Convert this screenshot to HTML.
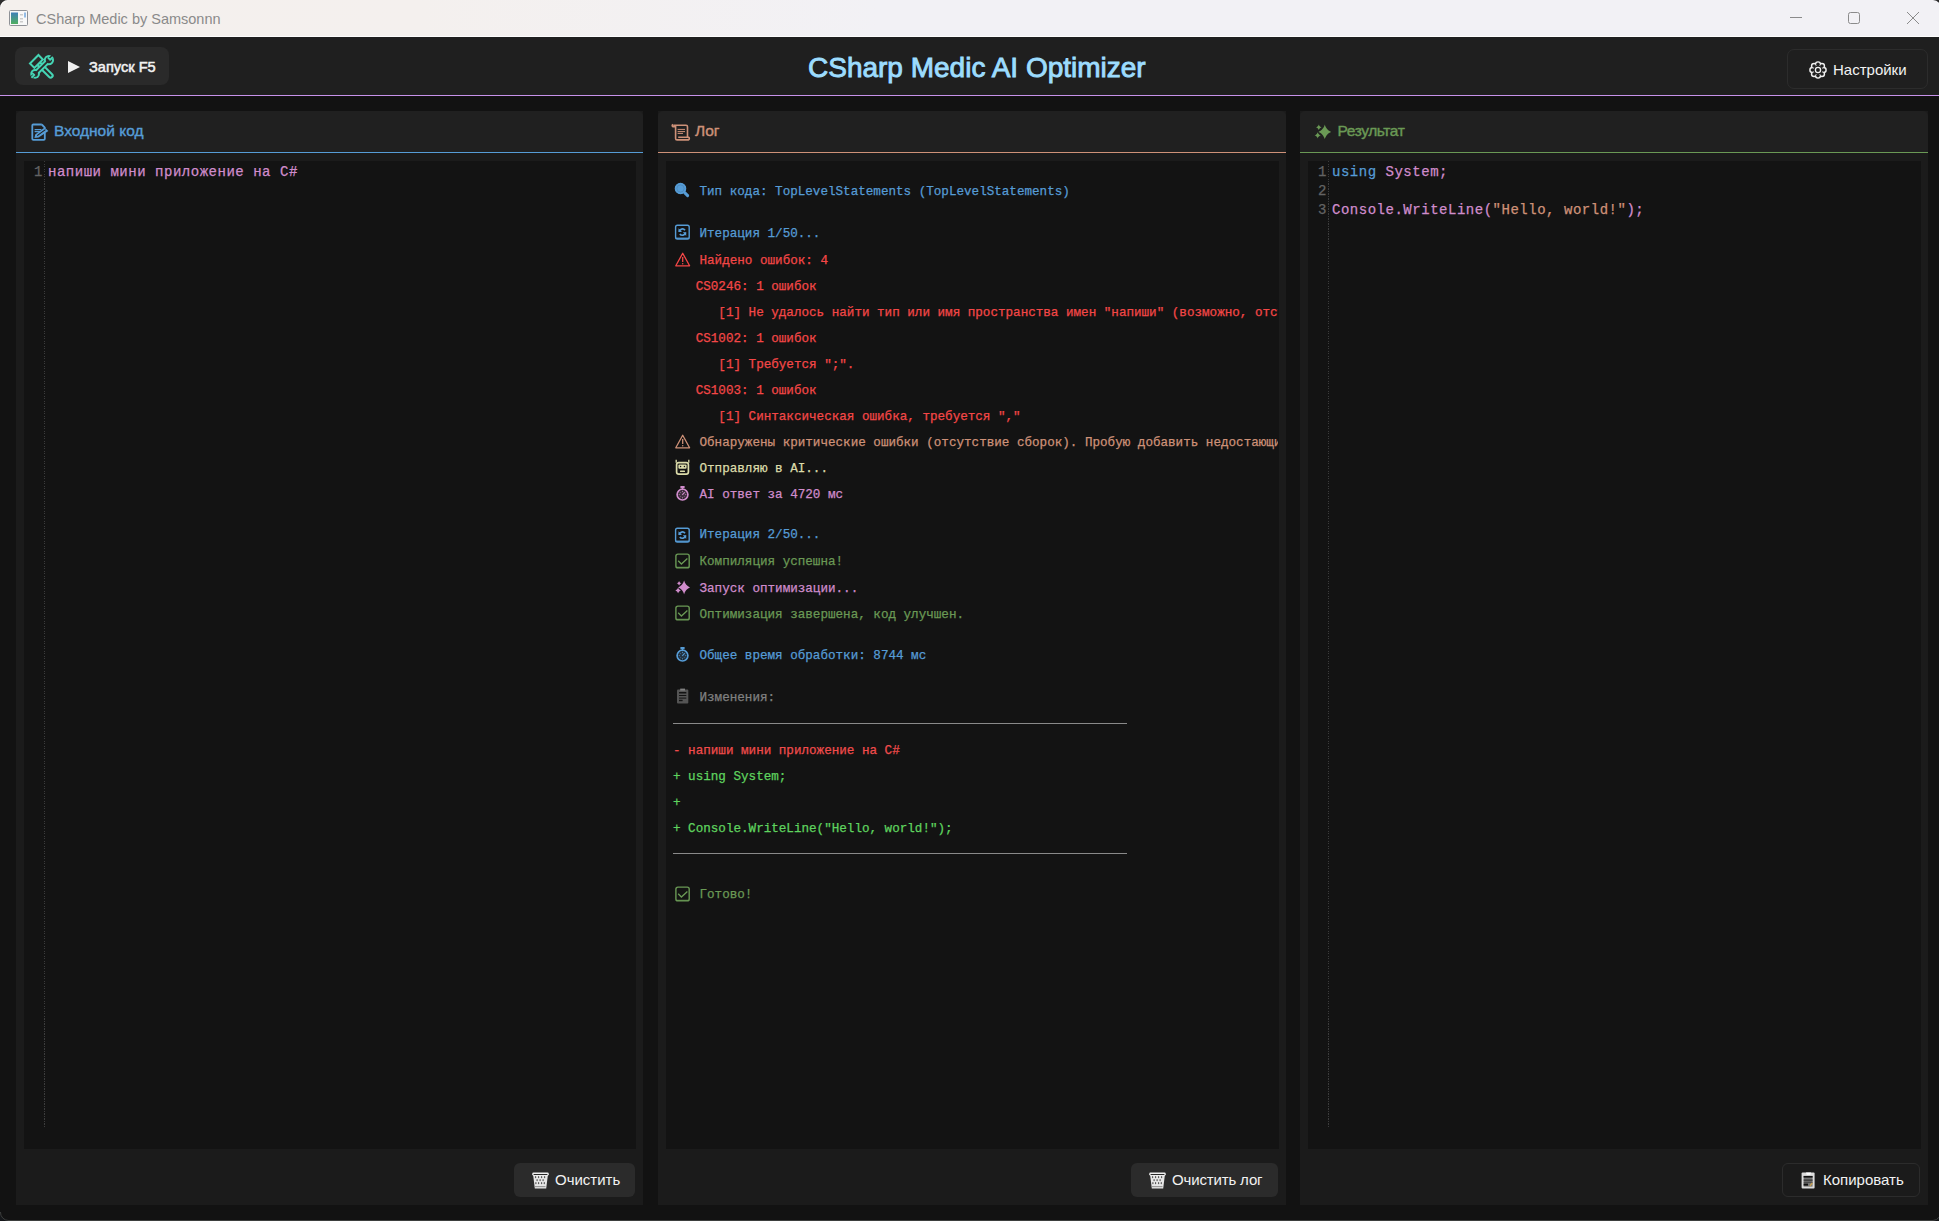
<!DOCTYPE html>
<html><head><meta charset="utf-8">
<style>
*{margin:0;padding:0;box-sizing:border-box}
html,body{width:1939px;height:1221px;overflow:hidden;background:#121212;font-family:"Liberation Sans",sans-serif;position:relative}
.abs{position:absolute}
#tb{left:0;top:0;width:1939px;height:37px;background:linear-gradient(90deg,#f4f0ed 0,#f4f0ee 420px,#f2f1f5 880px,#f2f1f5 100%);border-bottom:1px solid #fdfdfd}
#tbt{left:36px;top:9.5px;font-size:14.5px;color:#8a8a8a;line-height:18px;white-space:nowrap}
#hdr{left:0;top:37px;width:1939px;height:58px;background:#1f1f1f}
#hline{left:0;top:95px;width:1939px;height:1px;background:#c792ea}
.btn{position:absolute;border-radius:6px;color:#f2f2f2;font-size:15px;white-space:nowrap}
.panel{position:absolute;top:111px;height:1094px;background:#1b1b1b}
.ph{position:absolute;left:0;top:0;right:0;height:41px;background:#202020;border-radius:5px 5px 0 0}
.pl{position:absolute;left:0;right:0;top:41px;height:1px}
.code{position:absolute;left:8px;top:50px;right:7px;height:988px;background:#131313;overflow:hidden}
.ptitle{position:absolute;top:10px;font-size:15.5px;line-height:20px;-webkit-text-stroke:0.4px currentColor;white-space:nowrap}
.mono{font-family:"Liberation Mono",monospace;-webkit-text-stroke:0.25px currentColor}
.log{position:absolute;left:673px;font-family:"Liberation Mono",monospace;font-size:12.6px;letter-spacing:0px;line-height:20px;white-space:pre;-webkit-text-stroke:0.25px currentColor}
.ic{position:absolute;overflow:visible;z-index:5}
</style></head><body>
<div id="tb" class="abs"></div>
<div id="tbt" class="abs">CSharp Medic by Samsonnn</div>
<div id="hdr" class="abs"></div>
<div id="hline" class="abs"></div>
<!-- window controls -->
<svg class="ic" style="left:0;top:0" width="1939" height="37">
  <path d="M1790 17.5H1802" stroke="#8b8b8b" stroke-width="1"/>
  <rect x="1848.5" y="12.5" width="11" height="11" rx="2" fill="none" stroke="#8b8b8b" stroke-width="1"/>
  <path d="M1907 12L1919 24M1919 12L1907 24" stroke="#8b8b8b" stroke-width="1"/>
  <rect x="9.5" y="10.5" width="18" height="15" rx="1" fill="#f8f8f8" stroke="#8e9196" stroke-width="1"/>
  <defs><linearGradient id="appg" x1="0" y1="0" x2="0" y2="1"><stop offset="0" stop-color="#3f7fb8"/><stop offset="1" stop-color="#4fae5f"/></linearGradient></defs><rect x="11" y="12.5" width="7" height="11.5" fill="url(#appg)"/>
  <rect x="20" y="14" width="3" height="1.5" fill="#ccc"/><rect x="20" y="18" width="3" height="1.5" fill="#ccc"/><rect x="20" y="21" width="3" height="1.5" fill="#ccc"/>
  <rect x="24.5" y="12.5" width="1" height="5" fill="#2f7fd0"/>
</svg>
<!-- header buttons -->
<div class="btn" style="left:15px;top:47px;width:154px;height:38px;background:#2a2a2a;border-radius:8px"></div>
<svg class="ic" style="left:27px;top:52px" width="30" height="30" viewBox="0 0 30 30"><g transform="translate(0.6 0.6) scale(0.96)"><path d="M17.40 7.08L11.32 1.00L1.00 11.32L7.08 17.40ZM10.77 15.23L21.77 26.23A3.1500000000000004 3.1500000000000004 0 0 0 26.23 21.77L15.23 10.77A3.1500000000000004 3.1500000000000004 0 0 0 10.77 15.23Z" fill="#45d4b4"/><path d="M14.43 7.08L11.32 3.97L3.97 11.32L7.08 14.43ZM12.26 13.74L23.26 24.74A1.05 1.05 0 0 0 24.74 23.26L13.74 12.26A1.05 1.05 0 0 0 12.26 13.74Z" fill="#2a2a2a"/><path d="M10.16 24.16L24.16 10.16A3.05 3.05 0 0 0 19.84 5.84L5.84 19.84A3.05 3.05 0 0 0 10.16 24.16Z" fill="#45d4b4"/><circle cx="22.2" cy="7.8" r="5.35" fill="#45d4b4"/><circle cx="7.8" cy="22.2" r="5.05" fill="#45d4b4"/><path d="M8.67 22.67L22.67 8.67A0.95 0.95 0 0 0 21.33 7.33L7.33 21.33A0.95 0.95 0 0 0 8.67 22.67Z" fill="#2a2a2a"/><circle cx="22.2" cy="7.8" r="3.25" fill="#2a2a2a"/><circle cx="7.8" cy="22.2" r="2.95" fill="#2a2a2a"/><path d="M28.48 3.93L26.07 1.52L21.12 6.47L23.53 8.88ZM8.81 23.46L6.54 21.19L1.59 26.14L3.86 28.41Z" fill="#2a2a2a"/><path d="M21 5L23.5 7.4L26.4 4.6M4.6 21.2L7 23.2L4 26.2" fill="none" stroke="#45d4b4" stroke-width="2" stroke-linejoin="round"/></g></svg>
<svg class="ic" style="left:67px;top:60px" width="14" height="14" viewBox="0 0 14 14"><path d="M1 1L13 7L1 13Z" fill="#f0f0f0"/></svg>
<div class="btn" style="left:89px;top:57px;font-size:14.6px;line-height:20px;-webkit-text-stroke:0.5px #f2f2f2;color:#f2f2f2">Запуск F5</div>

<div class="abs" style="left:808px;top:50px;font-size:28px;line-height:36px;color:#9cdcfe;-webkit-text-stroke:0.9px #9cdcfe;letter-spacing:0px;white-space:nowrap">CSharp Medic AI Optimizer</div>

<div class="btn" style="left:1787px;top:49px;width:141px;height:40px;border:1px solid #2c2c2c;border-radius:7px"></div>
<svg class="ic" style="left:1809px;top:61px" width="18" height="18" viewBox="0 0 18 18"><circle cx="14.60" cy="9.00" r="3.20" fill="#f0f0f0"/><circle cx="12.96" cy="12.96" r="3.20" fill="#f0f0f0"/><circle cx="9.00" cy="14.60" r="3.20" fill="#f0f0f0"/><circle cx="5.04" cy="12.96" r="3.20" fill="#f0f0f0"/><circle cx="3.40" cy="9.00" r="3.20" fill="#f0f0f0"/><circle cx="5.04" cy="5.04" r="3.20" fill="#f0f0f0"/><circle cx="9.00" cy="3.40" r="3.20" fill="#f0f0f0"/><circle cx="12.96" cy="5.04" r="3.20" fill="#f0f0f0"/><circle cx="9" cy="9" r="5.6" fill="#f0f0f0"/><circle cx="14.60" cy="9.00" r="1.80" fill="#1f1f1f"/><circle cx="12.96" cy="12.96" r="1.80" fill="#1f1f1f"/><circle cx="9.00" cy="14.60" r="1.80" fill="#1f1f1f"/><circle cx="5.04" cy="12.96" r="1.80" fill="#1f1f1f"/><circle cx="3.40" cy="9.00" r="1.80" fill="#1f1f1f"/><circle cx="5.04" cy="5.04" r="1.80" fill="#1f1f1f"/><circle cx="9.00" cy="3.40" r="1.80" fill="#1f1f1f"/><circle cx="12.96" cy="5.04" r="1.80" fill="#1f1f1f"/><circle cx="9" cy="9" r="4.6" fill="#1f1f1f"/><circle cx="9" cy="9" r="2.6" fill="none" stroke="#f0f0f0" stroke-width="1.3"/></svg>
<div class="btn" style="left:1833px;top:60px;font-size:15px;line-height:20px">Настройки</div>

<div class="panel" style="left:16px;width:627px">
  <div class="ph"></div><div class="pl" style="background:#569cd6"></div>
  <div class="code"></div>
  <div class="ptitle" style="left:38px;color:#569cd6">Входной код</div>
</div>
<div class="panel" style="left:658px;width:628px">
  <div class="ph"></div><div class="pl" style="background:#ce9178"></div>
  <div class="code"></div>
  <div class="ptitle" style="left:37px;color:#ce9178">Лог</div>
</div>
<div class="panel" style="left:1300px;width:628px">
  <div class="ph"></div><div class="pl" style="background:#6a9955"></div>
  <div class="code"></div>
  <div class="ptitle" style="left:37.5px;color:#6a9955;letter-spacing:-0.4px">Результат</div>
</div>

<!-- editor 1 -->
<div class="abs" style="left:44px;top:161px;width:1px;height:966px;background:repeating-linear-gradient(180deg,#3c3c3c 0 1px,transparent 1px 2.5px)"></div>
<div class="abs mono" style="left:34px;top:162.5px;font-size:14px;letter-spacing:0.52px;line-height:19.1px;color:#636363;white-space:pre">1</div>
<div class="abs mono" style="left:48px;top:162.5px;font-size:14px;letter-spacing:0.52px;line-height:19.1px;color:#d08ccc;white-space:pre">напиши мини приложение на C#</div>

<!-- editor 3 -->
<div class="abs" style="left:1328px;top:161px;width:1px;height:966px;background:repeating-linear-gradient(180deg,#3c3c3c 0 1px,transparent 1px 2.5px)"></div>
<div class="abs mono" style="left:1318px;top:162.5px;font-size:14px;letter-spacing:0.52px;line-height:19.1px;color:#636363;white-space:pre">1
2
3</div>
<div class="abs mono" style="left:1332px;top:162.5px;font-size:14px;letter-spacing:0.52px;line-height:19.1px;color:#d08ccc;white-space:pre"><span style="color:#569cd6">using</span> System;

Console.WriteLine(<span style="color:#ce9178">"Hello, world!"</span>);</div>

<!-- LOG -->
<div class="abs" style="left:666px;top:161px;width:612px;height:988px;overflow:hidden">
<div class="log" style="left:33.50px;top:20.64px;color:#569cd6">Тип кода: TopLevelStatements (TopLevelStatements)</div>
<div class="log" style="left:33.50px;top:62.64px;color:#569cd6">Итерация 1/50...</div>
<div class="log" style="left:33.50px;top:89.64px;color:#f44747">Найдено ошибок: 4</div>
<div class="log" style="left:7.00px;top:115.64px;color:#f44747">   CS0246: 1 ошибок</div>
<div class="log" style="left:7.00px;top:141.64px;color:#f44747">      [1] Не удалось найти тип или имя пространства имен "напиши" (возможно, отсутствует директива using или ссылка на сборку).</div>
<div class="log" style="left:7.00px;top:167.64px;color:#f44747">   CS1002: 1 ошибок</div>
<div class="log" style="left:7.00px;top:193.64px;color:#f44747">      [1] Требуется ";".</div>
<div class="log" style="left:7.00px;top:219.64px;color:#f44747">   CS1003: 1 ошибок</div>
<div class="log" style="left:7.00px;top:245.64px;color:#f44747">      [1] Синтаксическая ошибка, требуется ","</div>
<div class="log" style="left:33.50px;top:271.64px;color:#ce9178">Обнаружены критические ошибки (отсутствие сборок). Пробую добавить недостающие using...</div>
<div class="log" style="left:33.50px;top:297.64px;color:#dcdcaa">Отправляю в AI...</div>
<div class="log" style="left:33.50px;top:323.64px;color:#d08ccc">AI ответ за 4720 мс</div>
<div class="log" style="left:33.50px;top:364.14px;color:#569cd6">Итерация 2/50...</div>
<div class="log" style="left:33.50px;top:390.64px;color:#6a9955">Компиляция успешна!</div>
<div class="log" style="left:33.50px;top:417.64px;color:#d08ccc">Запуск оптимизации...</div>
<div class="log" style="left:33.50px;top:443.64px;color:#6a9955">Оптимизация завершена, код улучшен.</div>
<div class="log" style="left:33.50px;top:484.64px;color:#569cd6">Общее время обработки: 8744 мс</div>
<div class="log" style="left:33.50px;top:526.64px;color:#808080">Изменения:</div>
<div class="log" style="left:7.00px;top:579.64px;color:#f14c4c">- напиши мини приложение на C#</div>
<div class="log" style="left:7.00px;top:605.64px;color:#5fd35f">+ using System;</div>
<div class="log" style="left:7.00px;top:631.64px;color:#5fd35f">+</div>
<div class="log" style="left:7.00px;top:657.64px;color:#5fd35f">+ Console.WriteLine("Hello, world!");</div>
<div class="log" style="left:33.50px;top:724.14px;color:#6a9955">Готово!</div>
<div class="abs" style="left:7px;top:562px;width:454px;height:1px;background:#8a8a8a"></div>
<div class="abs" style="left:7px;top:692px;width:454px;height:1px;background:#8a8a8a"></div>
</div>
<!-- ICONS -->
<svg class="ic" style="left:672px;top:180px" width="20" height="20" viewBox="0 0 20 20"><circle cx="8.5" cy="8.5" r="5.2" fill="#569cd6" stroke="#569cd6" stroke-width="1.2"/><circle cx="8.5" cy="8.5" r="3.6" fill="none" stroke="#3d6f99" stroke-width="0.6" opacity="0.6"/><path d="M12.6 12.6L15.6 15.6" stroke="#569cd6" stroke-width="3" stroke-linecap="round"/></svg>
<svg class="ic" style="left:672px;top:222px" width="20" height="20" viewBox="0 0 20 20"><rect x="3.6" y="3.2" width="13.6" height="13.8" rx="1.8" fill="none" stroke="#569cd6" stroke-width="1.4"/><path d="M3.6 16.2H17.2" stroke="#569cd6" stroke-width="1.2"/><path d="M7.2 9.6A3.3 3.3 0 0 1 13 8.2" fill="none" stroke="#569cd6" stroke-width="1.7"/><path d="M6.5 6.2V10H10Z" fill="#569cd6"/><path d="M13.6 10.6A3.3 3.3 0 0 1 7.8 12" fill="none" stroke="#569cd6" stroke-width="1.7"/><path d="M14.2 14V10.3H10.8Z" fill="#569cd6"/></svg>
<svg class="ic" style="left:672px;top:250px" width="20" height="20" viewBox="0 0 20 20"><path d="M10.7 3.3L17.6 15.8H3.8Z" fill="none" stroke="#f44747" stroke-width="1.3" stroke-linejoin="round"/><path d="M10.7 7V12" stroke="#f44747" stroke-width="1.3"/><circle cx="10.7" cy="13.8" r="0.75" fill="#f44747"/></svg>
<svg class="ic" style="left:672px;top:432px" width="20" height="20" viewBox="0 0 20 20"><path d="M10.7 3.3L17.6 15.8H3.8Z" fill="none" stroke="#ce9178" stroke-width="1.3" stroke-linejoin="round"/><path d="M10.7 7V12" stroke="#ce9178" stroke-width="1.3"/><circle cx="10.7" cy="13.8" r="0.75" fill="#ce9178"/></svg>
<svg class="ic" style="left:672px;top:457px" width="20" height="20" viewBox="0 0 20 20"><rect x="4.6" y="5.6" width="11.8" height="11.6" rx="2.2" fill="none" stroke="#dcdcaa" stroke-width="1.7"/><path d="M4.2 2.8V5.8M16.8 2.8V5.8" stroke="#dcdcaa" stroke-width="1.3"/><rect x="6.4" y="7.4" width="8.2" height="4.4" rx="1.2" fill="#dcdcaa"/><circle cx="8.6" cy="9.5" r="0.7" fill="#131313"/><circle cx="12.4" cy="9.5" r="0.7" fill="#131313"/><rect x="8" y="13.4" width="5" height="1.6" rx="0.6" fill="#dcdcaa"/></svg>
<svg class="ic" style="left:672px;top:483px" width="20" height="20" viewBox="0 0 20 20"><rect x="8.4" y="3" width="4.2" height="2" fill="#d08ccc"/><path d="M10.5 5V6.4" stroke="#d08ccc" stroke-width="1.4"/><circle cx="10.5" cy="11.6" r="5.4" fill="none" stroke="#d08ccc" stroke-width="1.7"/><circle cx="10.5" cy="11.6" r="4" fill="#d08ccc" opacity="0.25"/><path d="M10.5 7.8V8.8M10.5 14.4V15.4M6.7 11.6H7.7M13.3 11.6H14.3M8 9.1L8.5 9.6M13 9.1L12.5 9.6M8 14.1L8.5 13.6M13 14.1L12.5 13.6" stroke="#d08ccc" stroke-width="0.9"/><path d="M10.3 11.8L12.6 9.4" stroke="#d08ccc" stroke-width="1.1"/></svg>
<svg class="ic" style="left:672px;top:525px" width="20" height="20" viewBox="0 0 20 20"><rect x="3.6" y="3.2" width="13.6" height="13.8" rx="1.8" fill="none" stroke="#569cd6" stroke-width="1.4"/><path d="M3.6 16.2H17.2" stroke="#569cd6" stroke-width="1.2"/><path d="M7.2 9.6A3.3 3.3 0 0 1 13 8.2" fill="none" stroke="#569cd6" stroke-width="1.7"/><path d="M6.5 6.2V10H10Z" fill="#569cd6"/><path d="M13.6 10.6A3.3 3.3 0 0 1 7.8 12" fill="none" stroke="#569cd6" stroke-width="1.7"/><path d="M14.2 14V10.3H10.8Z" fill="#569cd6"/></svg>
<svg class="ic" style="left:672px;top:551px" width="20" height="20" viewBox="0 0 20 20"><rect x="3.9" y="3.1" width="13.3" height="13.8" rx="2" fill="none" stroke="#6a9955" stroke-width="1.4"/><path d="M3.9 16.3H17.2" stroke="#6a9955" stroke-width="1"/><path d="M6.2 9.8L9.4 13L15.4 7.4" fill="none" stroke="#6a9955" stroke-width="1.3"/></svg>
<svg class="ic" style="left:672px;top:577px" width="20" height="20" viewBox="0 0 20 20"><path d="M12.10 3.60C12.81 6.66 15.35 9.58 18.00 10.40C15.35 11.22 12.81 14.14 12.10 17.20C11.39 14.14 8.85 11.22 6.20 10.40C8.85 9.58 11.39 6.66 12.10 3.60ZM7.10 3.90C7.39 4.98 8.42 6.01 9.50 6.30C8.42 6.59 7.39 7.62 7.10 8.70C6.81 7.62 5.78 6.59 4.70 6.30C5.78 6.01 6.81 4.98 7.10 3.90ZM6.10 10.60C6.44 11.86 7.64 13.06 8.90 13.40C7.64 13.74 6.44 14.94 6.10 16.20C5.76 14.94 4.56 13.74 3.30 13.40C4.56 13.06 5.76 11.86 6.10 10.60Z" fill="#d08ccc"/></svg>
<svg class="ic" style="left:672px;top:603px" width="20" height="20" viewBox="0 0 20 20"><rect x="3.9" y="3.1" width="13.3" height="13.8" rx="2" fill="none" stroke="#6a9955" stroke-width="1.4"/><path d="M3.9 16.3H17.2" stroke="#6a9955" stroke-width="1"/><path d="M6.2 9.8L9.4 13L15.4 7.4" fill="none" stroke="#6a9955" stroke-width="1.3"/></svg>
<svg class="ic" style="left:672px;top:644px" width="20" height="20" viewBox="0 0 20 20"><rect x="8.4" y="3" width="4.2" height="2" fill="#569cd6"/><path d="M10.5 5V6.4" stroke="#569cd6" stroke-width="1.4"/><circle cx="10.5" cy="11.6" r="5.4" fill="none" stroke="#569cd6" stroke-width="1.7"/><circle cx="10.5" cy="11.6" r="4" fill="#569cd6" opacity="0.25"/><path d="M10.5 7.8V8.8M10.5 14.4V15.4M6.7 11.6H7.7M13.3 11.6H14.3M8 9.1L8.5 9.6M13 9.1L12.5 9.6M8 14.1L8.5 13.6M13 14.1L12.5 13.6" stroke="#569cd6" stroke-width="0.9"/><path d="M10.3 11.8L12.6 9.4" stroke="#569cd6" stroke-width="1.1"/></svg>
<svg class="ic" style="left:672px;top:686px" width="20" height="20" viewBox="0 0 20 20"><rect x="5" y="3.4" width="11.3" height="14" rx="1" fill="#808080" opacity="0.6"/><rect x="7" y="6" width="7.3" height="1.5" fill="#131313"/><rect x="7" y="9" width="7.3" height="1" fill="#131313"/><rect x="7" y="11.6" width="7.3" height="1" fill="#131313"/><rect x="7" y="13.8" width="3.6" height="1.4" fill="#131313"/><rect x="8.2" y="2.6" width="4.8" height="2" fill="#808080"/></svg>
<svg class="ic" style="left:672px;top:884px" width="20" height="20" viewBox="0 0 20 20"><rect x="3.9" y="3.1" width="13.3" height="13.8" rx="2" fill="none" stroke="#6a9955" stroke-width="1.4"/><path d="M3.9 16.3H17.2" stroke="#6a9955" stroke-width="1"/><path d="M6.2 9.8L9.4 13L15.4 7.4" fill="none" stroke="#6a9955" stroke-width="1.3"/></svg>
<svg class="ic" style="left:29px;top:121px" width="22" height="22" viewBox="0 0 22 22"><path d="M12.8 3.5H4.3a1 1 0 0 0-1 1V17.8a1 1 0 0 0 1 1H14.8a1 1 0 0 0 1-1V11.5M12.8 3.5L15.8 6.6V7.5" fill="none" stroke="#569cd6" stroke-width="1.8"/><path d="M5.6 8.6H12.4M5.6 10.6H11" stroke="#569cd6" stroke-width="1.1"/><path d="M5.4 17L6.2 13.4L15.6 6.4L19.4 10L9.6 16.4Z" fill="#569cd6"/><path d="M8.2 14.6L16.4 8.6" stroke="#1f1f1f" stroke-width="1.1"/></svg>
<svg class="ic" style="left:670px;top:121px" width="22" height="22" viewBox="0 0 22 22"><path d="M3.2 4.2H16a1.5 1.5 0 0 1 1.5 1.5V16.4" fill="none" stroke="#ce9178" stroke-width="1.6"/><path d="M3 3.4a1.3 1.3 0 0 0 0 2.4H5.6V17.5a1.4 1.4 0 0 0 1.4 1.4H18.6a1.5 1.5 0 0 0 0-2.6H8.2" fill="none" stroke="#ce9178" stroke-width="1.6"/><path d="M7.6 8.4H15M7.6 10.6H15M7.6 12.4H13" stroke="#ce9178" stroke-width="1"/></svg>
<svg class="ic" style="left:1312px;top:121px" width="22" height="22" viewBox="0 0 22 22"><path d="M12.80 3.60C13.56 6.88 16.27 10.02 19.10 10.90C16.27 11.78 13.56 14.92 12.80 18.20C12.04 14.92 9.34 11.78 6.50 10.90C9.34 10.02 12.04 6.88 12.80 3.60ZM6.80 3.50C7.14 4.76 8.34 5.96 9.60 6.30C8.34 6.64 7.14 7.84 6.80 9.10C6.46 7.84 5.26 6.64 4.00 6.30C5.26 5.96 6.46 4.76 6.80 3.50ZM5.70 11.20C6.07 12.60 7.41 13.93 8.80 14.30C7.41 14.67 6.07 16.01 5.70 17.40C5.33 16.01 4.00 14.67 2.60 14.30C4.00 13.93 5.33 12.60 5.70 11.20Z" fill="#6a9955"/></svg>
<svg class="ic" style="left:529px;top:1169px" width="22" height="22" viewBox="0 0 22 22"><path d="M4 5H19L17.2 19.4H5.8Z" fill="#e6e6e6"/><rect x="3.2" y="3.5" width="16.6" height="3.2" rx="1.4" fill="#f0f0f0"/><rect x="4.6" y="5" width="13.8" height="0.9" fill="#111"/><g fill="#555"><ellipse cx="6.6" cy="8.2" rx="0.65" ry="1.1"/><ellipse cx="9.6" cy="8.2" rx="0.65" ry="1.1"/><ellipse cx="12.6" cy="8.2" rx="0.65" ry="1.1"/><ellipse cx="15.6" cy="8.2" rx="0.65" ry="1.1"/><ellipse cx="8.1" cy="11.2" rx="0.65" ry="1.1"/><ellipse cx="11.1" cy="11.2" rx="0.65" ry="1.1"/><ellipse cx="14.1" cy="11.2" rx="0.65" ry="1.1"/><ellipse cx="6.9" cy="14.2" rx="0.65" ry="1.1"/><ellipse cx="9.6" cy="14.2" rx="0.65" ry="1.1"/><ellipse cx="12.6" cy="14.2" rx="0.65" ry="1.1"/><ellipse cx="15.3" cy="14.2" rx="0.65" ry="1.1"/></g><rect x="6" y="17" width="10.5" height="1.2" fill="#999"/></svg>
<svg class="ic" style="left:1146px;top:1169px" width="22" height="22" viewBox="0 0 22 22"><path d="M4 5H19L17.2 19.4H5.8Z" fill="#e6e6e6"/><rect x="3.2" y="3.5" width="16.6" height="3.2" rx="1.4" fill="#f0f0f0"/><rect x="4.6" y="5" width="13.8" height="0.9" fill="#111"/><g fill="#555"><ellipse cx="6.6" cy="8.2" rx="0.65" ry="1.1"/><ellipse cx="9.6" cy="8.2" rx="0.65" ry="1.1"/><ellipse cx="12.6" cy="8.2" rx="0.65" ry="1.1"/><ellipse cx="15.6" cy="8.2" rx="0.65" ry="1.1"/><ellipse cx="8.1" cy="11.2" rx="0.65" ry="1.1"/><ellipse cx="11.1" cy="11.2" rx="0.65" ry="1.1"/><ellipse cx="14.1" cy="11.2" rx="0.65" ry="1.1"/><ellipse cx="6.9" cy="14.2" rx="0.65" ry="1.1"/><ellipse cx="9.6" cy="14.2" rx="0.65" ry="1.1"/><ellipse cx="12.6" cy="14.2" rx="0.65" ry="1.1"/><ellipse cx="15.3" cy="14.2" rx="0.65" ry="1.1"/></g><rect x="6" y="17" width="10.5" height="1.2" fill="#999"/></svg>
<svg class="ic" style="left:1797px;top:1169px" width="22" height="22" viewBox="0 0 22 22"><rect x="4.6" y="3.6" width="13" height="16" rx="1" fill="#dcdcdc"/><rect x="6.6" y="6.8" width="9" height="10.8" fill="#777"/><rect x="6.6" y="7" width="9" height="1.6" fill="#111"/><rect x="6.6" y="10.6" width="9" height="1" fill="#222"/><rect x="6.6" y="12.8" width="9" height="0.8" fill="#333"/><rect x="6.6" y="14.6" width="4.4" height="2" fill="#111"/><path d="M9 3.4H14L13.2 5.8H9.8Z" fill="#fff"/><path d="M12.8 17L15.4 14" stroke="#c8a050" stroke-width="1.2"/></svg>
<!-- bottom buttons -->
<div class="btn" style="left:514px;top:1163px;width:121px;height:34px;background:#2b2b2b;border-radius:6px"></div>
<div class="btn" style="left:555px;top:1170px;line-height:20px">Очистить</div>
<div class="btn" style="left:1131px;top:1163px;width:147px;height:34px;background:#2b2b2b;border-radius:6px"></div>
<div class="btn" style="left:1172px;top:1170px;line-height:20px;letter-spacing:-0.15px">Очистить лог</div>
<div class="btn" style="left:1782px;top:1163px;width:138px;height:34px;border:1px solid #2c2c2c;border-radius:6px"></div>
<div class="btn" style="left:1823px;top:1170px;line-height:20px">Копировать</div>

<div class="abs" style="left:0;top:1220px;width:1939px;height:1px;background:#3d3f3e;z-index:9"></div>
<svg class="ic" style="left:0;top:0;z-index:10" width="1939" height="1221">
  <path d="M0 0H8A8 8 0 0 0 0 8Z" fill="#2e2e2e"/><path d="M0.7 8A7.3 7.3 0 0 1 8 0.7" fill="none" stroke="#fff" stroke-width="0.8" opacity="0.8"/>
  <path d="M1933 0A8 8 0 0 1 1939 2.7V0Z" fill="#2a2a2a"/>
  <path d="M0 1221V1212A8 8 0 0 0 8 1220H8V1221Z" fill="#15171a"/>
  <path d="M0.5 1212A8 8 0 0 0 8.5 1220.5" fill="none" stroke="#3d3f3e" stroke-width="1"/>
  <path d="M1939 1221V1217.3A8 8 0 0 1 1933 1220.5V1221Z" fill="#15171a"/>
  <path d="M1939 1217.3A8 8 0 0 1 1933 1220.5" fill="none" stroke="#3d3f3e" stroke-width="1"/>
</svg>
</body></html>
